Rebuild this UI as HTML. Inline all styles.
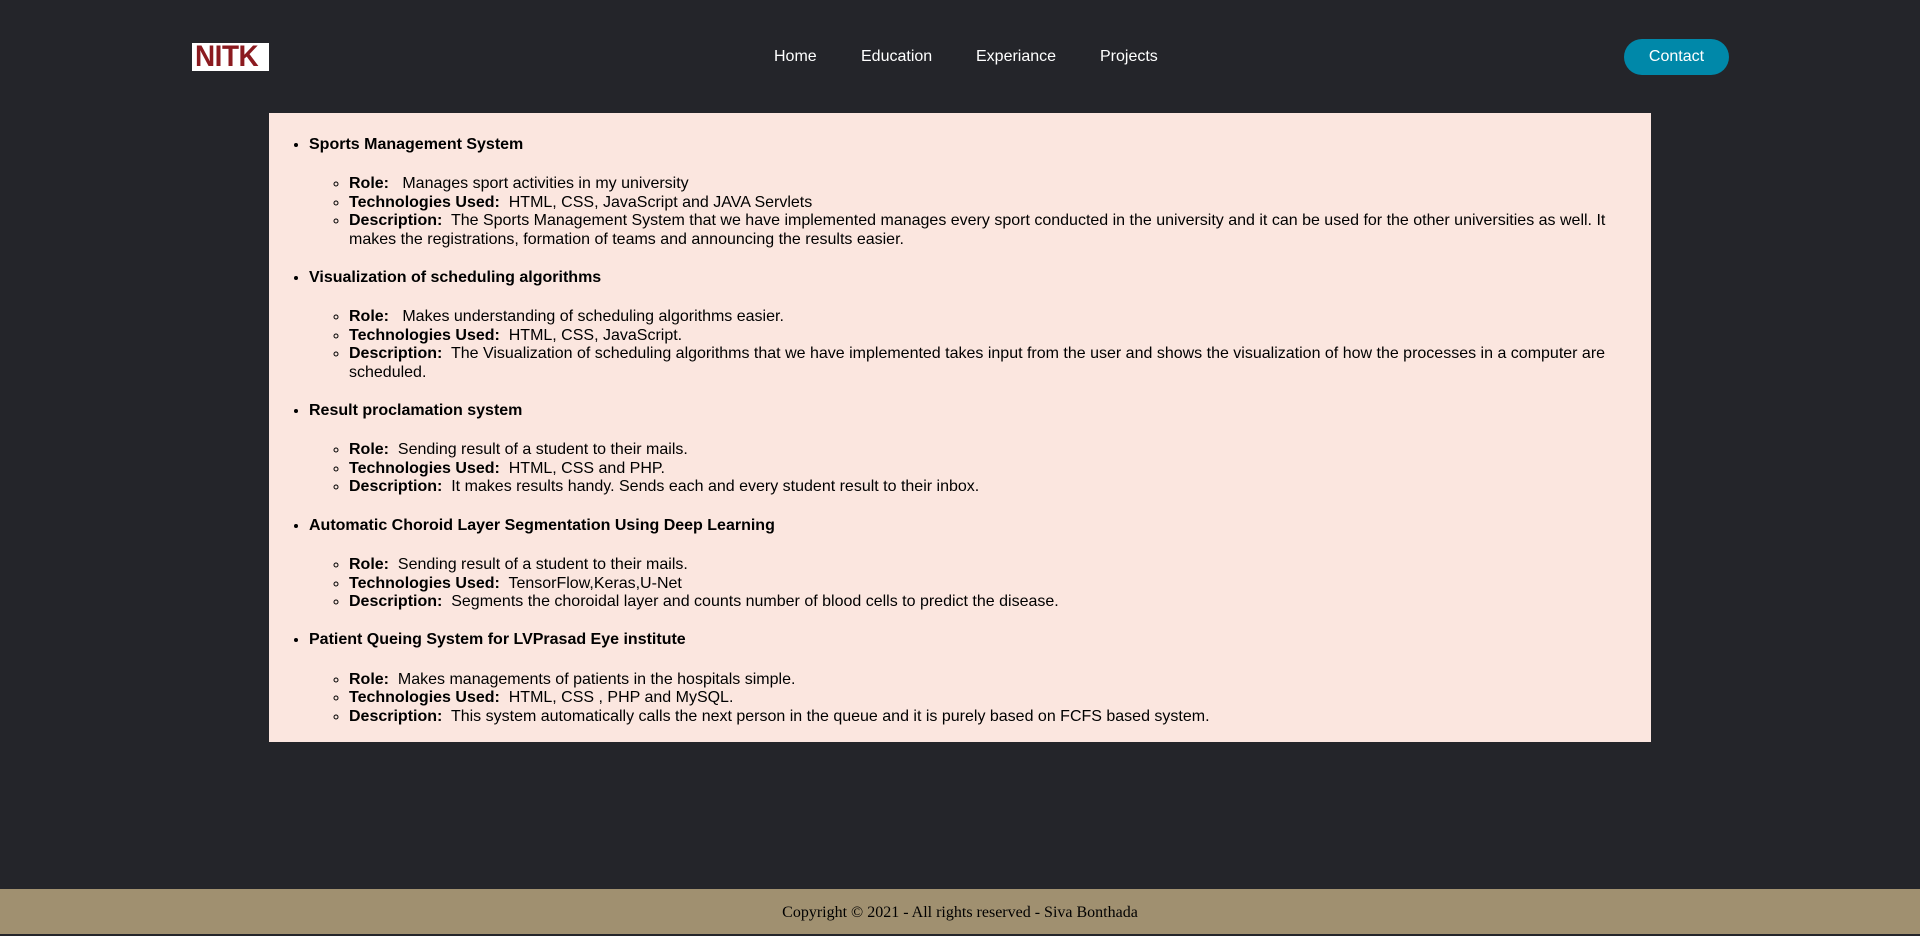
<!DOCTYPE html>
<html><head><meta charset="utf-8"><style>
*{box-sizing:border-box}
body{margin:0;width:1920px;height:934px;background:#24252a;font-family:"Liberation Sans",Arial,sans-serif;position:relative;overflow:hidden}
.logo{position:absolute;left:192px;top:43px;width:77px;height:28px;background:#fff;overflow:hidden}
.logo span{position:absolute;left:3px;top:-1px;color:#8b1a1f;font-weight:bold;font-size:30px;line-height:30px;display:inline-block;transform:scaleX(0.93);transform-origin:left top;letter-spacing:-0.5px}
.nav a{position:absolute;top:48px;color:#fff;font-size:16px;text-decoration:none}
.btn{position:absolute;left:1624px;top:39px;width:105px;height:36px;border-radius:18px;background:#0088a9;color:#fff;font-size:16px;line-height:36px;text-align:center}
.panel{position:absolute;left:269px;top:113px;width:1382px;height:629px;background:#fbe6df;padding:7px 40px 0 0;color:#000;font-size:16px;line-height:18.4px}
.panel>ul{margin:16px 0 0;padding-left:40px;list-style:disc}
.t{font-weight:bold;margin-bottom:21px}
.panel ul ul{margin:0 0 20px;padding-left:40px;list-style:circle}
footer{position:absolute;left:0;top:889px;width:1920px;height:45px;background:#a09070;font-family:"Liberation Serif",serif;font-size:16px;text-align:center;line-height:47px;color:#000}
</style></head><body>
<div class="logo"><span>NITK</span></div>
<div class="nav"><a style="left:774px">Home</a><a style="left:861px">Education</a><a style="left:976px">Experiance</a><a style="left:1100px">Projects</a></div>
<div class="btn">Contact</div>
<div class="panel"><ul>
<li><div class="t">Sports Management System</div><ul>
<li><b>Role:</b>&nbsp;&nbsp; Manages sport activities in my university</li>
<li><b>Technologies Used:</b>&nbsp; HTML, CSS, JavaScript and JAVA Servlets</li>
<li><b>Description:</b>&nbsp; The Sports Management System that we have implemented manages every sport conducted in the university and it can be used for the other universities as well. It makes the registrations, formation of teams and announcing the results easier.</li></ul></li>
<li><div class="t">Visualization of scheduling algorithms</div><ul>
<li><b>Role:</b>&nbsp;&nbsp; Makes understanding of scheduling algorithms easier.</li>
<li><b>Technologies Used:</b>&nbsp; HTML, CSS, JavaScript.</li>
<li><b>Description:</b>&nbsp; The Visualization of scheduling algorithms that we have implemented takes input from the user and shows the visualization of how the processes in a computer are scheduled.</li></ul></li>
<li><div class="t">Result proclamation system</div><ul>
<li><b>Role:</b>&nbsp; Sending result of a student to their mails.</li>
<li><b>Technologies Used:</b>&nbsp; HTML, CSS and PHP.</li>
<li><b>Description:</b>&nbsp; It makes results handy. Sends each and every student result to their inbox.</li></ul></li>
<li><div class="t">Automatic Choroid Layer Segmentation Using Deep Learning</div><ul>
<li><b>Role:</b>&nbsp; Sending result of a student to their mails.</li>
<li><b>Technologies Used:</b>&nbsp; TensorFlow,Keras,U-Net</li>
<li><b>Description:</b>&nbsp; Segments the choroidal layer and counts number of blood cells to predict the disease.</li></ul></li>
<li><div class="t">Patient Queing System for LVPrasad Eye institute</div><ul>
<li><b>Role:</b>&nbsp; Makes managements of patients in the hospitals simple.</li>
<li><b>Technologies Used:</b>&nbsp; HTML, CSS , PHP and MySQL.</li>
<li><b>Description:</b>&nbsp; This system automatically calls the next person in the queue and it is purely based on FCFS based system.</li></ul></li>
</ul></div>
<footer>Copyright © 2021 - All rights reserved - Siva Bonthada</footer>
</body></html>
